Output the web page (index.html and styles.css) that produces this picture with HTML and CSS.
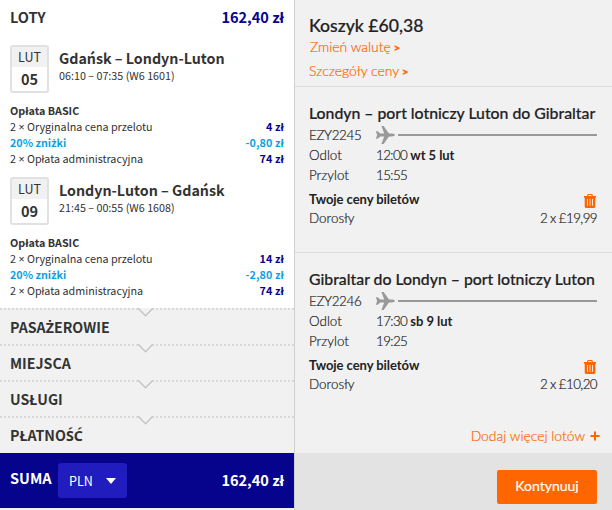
FILE: index.html
```html
<!DOCTYPE html>
<html lang="pl">
<head>
<meta charset="utf-8">
<title>Koszyk</title>
<link rel="stylesheet" href="styles.css">
</head>
<body>
<svg class="defs" width="0" height="0" aria-hidden="true">
  <symbol id="plane" viewBox="0 0 20 20"><path d="M0.8 6.2H2.6L5.4 8.6H9.2L6.4 1H8.6L14 8.6H17.2Q20 9 20 10Q20 11 17.2 11.4H14L8.6 19H6.4L9.2 11.4H5.4L2.6 13.8H0.8L2.2 10Z"/></symbol>
  <symbol id="trash" viewBox="0 0 12 14"><path fill-rule="evenodd" d="M3.2 2V1.2Q3.2 0 4.4 0H7.6Q8.8 0 8.8 1.2V2H12V3.8H11.3V12.4Q11.3 14 9.7 14H2.3Q.7 14 .7 12.4V3.8H0V2ZM4.4 2H7.6V1.1H4.4Z"/><path class="slots" d="M3.5 5V11.8M6 5V11.8M8.5 5V11.8"/></symbol>
</svg>
<main class="page">
  <section class="wizz">
    <header class="head"><b>LOTY</b><b class="price">162,40 zł</b></header>
    <article class="flight">
      <div class="route">
        <div class="date"><span>LUT</span><b>05</b></div>
        <div><h2>Gdańsk – Londyn-Luton</h2><p>06:10 – 07:35 (W6 1601)</p></div>
      </div>
      <b class="line fare">Opłata BASIC</b>
      <div class="line"><span>2 <i class="alt">×</i> Oryginalna cena przelotu</span><b>4 zł</b></div>
      <div class="line sale"><b>20% zni<i class="alt">ż</i>ki</b><b>-0,80 zł</b></div>
      <div class="line"><span>2 <i class="alt">×</i> Opłata administracyjna</span><b>74 zł</b></div>
    </article>
    <article class="flight">
      <div class="route">
        <div class="date"><span>LUT</span><b>09</b></div>
        <div><h2>Londyn-Luton – Gdańsk</h2><p>21:45 – 00:55 (W6 1608)</p></div>
      </div>
      <b class="line fare">Opłata BASIC</b>
      <div class="line"><span>2 <i class="alt">×</i> Oryginalna cena przelotu</span><b>14 zł</b></div>
      <div class="line sale"><b>20% zni<i class="alt">ż</i>ki</b><b>-2,80 zł</b></div>
      <div class="line"><span>2 <i class="alt">×</i> Opłata administracyjna</span><b>74 zł</b></div>
    </article>
    <nav class="steps">
      <div class="step"><svg width="15" height="9"><path d="M0 .8H.6L7.5 7.7L14.4 .8H15"/></svg>PASA<i class="alt">Ż</i>EROWIE</div>
      <div class="step"><svg width="15" height="9"><path d="M0 .8H.6L7.5 7.7L14.4 .8H15"/></svg>MIEJSCA</div>
      <div class="step"><svg width="15" height="9"><path d="M0 .8H.6L7.5 7.7L14.4 .8H15"/></svg>USŁUGI</div>
      <div class="step"><svg width="15" height="9"><path d="M0 .8H.6L7.5 7.7L14.4 .8H15"/></svg>PŁATNO<i class="alt">ŚĆ</i></div>
    </nav>
    <footer class="sum"><b class="label">SUMA</b><span class="select">PLN<i class="arrow"></i></span><b class="total">162,40 zł</b></footer>
  </section>
  <section class="easy">
    <header class="basket">
      <h1>Koszyk £60,38</h1>
      <a class="currency">Zmień walutę <b>&gt;</b></a>
      <a class="details">Szczegóły ceny <b>&gt;</b></a>
    </header>
    <article class="trip first">
      <h2>Londyn – port lotniczy Luton do Gibraltar</h2>
      <div class="row"><span class="key code">EZY2245</span><svg class="plane" width="20" height="20"><use href="#plane"/></svg><hr></div>
      <div class="row"><span class="key">Odlot</span><span class="time">12:00</span><b>wt 5 lut</b></div>
      <div class="row"><span class="key">Przylot</span><span class="time">15:55</span></div>
      <div class="row tickets"><b>Twoje ceny biletów</b><svg class="trash" width="12" height="14"><use href="#trash"/></svg></div>
      <div class="row adult"><span>Dorosły</span><span class="cost">2 x £19,99</span></div>
    </article>
    <article class="trip second">
      <h2>Gibraltar do Londyn – port lotniczy Luton</h2>
      <div class="row"><span class="key code">EZY2246</span><svg class="plane" width="20" height="20"><use href="#plane"/></svg><hr></div>
      <div class="row"><span class="key">Odlot</span><span class="time">17:30</span><b>sb 9 lut</b></div>
      <div class="row"><span class="key">Przylot</span><span class="time">19:25</span></div>
      <div class="row tickets"><b>Twoje ceny biletów</b><svg class="trash" width="12" height="14"><use href="#trash"/></svg></div>
      <div class="row adult"><span>Dorosły</span><span class="cost">2 x £10,20</span></div>
      <a class="more"><span>Dodaj więcej lotów</span><svg width="10" height="10"><path d="M5 .5V9.5M.5 5H9.5"/></svg></a>
    </article>
    <footer class="actions"><button>Kontynuuj</button></footer>
  </section>
</main>
</body>
</html>
```
FILE: styles.css
```css
* { box-sizing: border-box; margin: 0; padding: 0; }
body { width: 612px; height: 510px; overflow: hidden; background: #f1f1f1; }
.defs { position: absolute; }
.page { display: grid; grid-template-columns: 294px 318px; height: 510px; }

.wizz { font: 10.75px/16px "Noto Sans CJK JP", "Noto Sans", sans-serif; color: #333; }
.alt { font-family: "Noto Sans", sans-serif; font-style: normal; line-height: 1; }
.head { display: flex; justify-content: space-between; height: 45px; padding: 7px 10px 0; background: #fff; font-size: 14.5px; line-height: 20px; }
.price { color: #06038d; }
.flight { height: 132px; padding: 0 10px; background: #fff; }
.route { display: flex; gap: 10px; height: 58px; }
.date { width: 39px; height: 48px; border: 2px solid #e1e1e1; border-radius: 3px; text-align: center; }
.date span { display: block; height: 20px; background: #f1f1f1; font-size: 12.5px; line-height: 20px; }
.date b { display: block; font-size: 14.5px; line-height: 24px; }
.route h2 { font-size: 14.25px; line-height: 20px; padding-top: 3px; white-space: nowrap; }
.route p { line-height: 16px; }
.line { display: flex; justify-content: space-between; height: 16px; white-space: nowrap; }
.line b:last-child { color: #06038d; letter-spacing: .1px; }
.sale b, .sale b:last-child { color: #0f9fe0; }
.step { position: relative; height: 36px; padding: 8px 10px 0; background: repeating-linear-gradient(90deg, #dadada 0 2px, transparent 2px 4px) 0 0 / 100% 2px no-repeat #f1f1f1; font-size: 14.2px; font-weight: 700; line-height: 22px; }
.steps { height: 145px; margin-top: -1px; background: #f1f1f1; }
.step svg { position: absolute; left: 138px; top: 0; background: #f1f1f1; }
.step path { fill: none; stroke: #c4c4c4; stroke-width: 1.4; }
.sum { display: flex; align-items: center; height: 55px; padding: 0 10px; background: #06038d; color: #fff; font-size: 14.5px; }
.sum .label { padding-bottom: 6px; width: 48px; }
.select { display: flex; align-items: center; justify-content: space-between; width: 69px; height: 35px; padding: 0 11px; border-radius: 3px; background: #211cbe; font-size: 12.5px; }
.arrow { border: 5px solid transparent; border-top: 6px solid #fff; border-bottom: 0; }
.total { margin-left: auto; padding-bottom: 1px; }

.easy { border-left: 1px solid #d0d0d0; background: #f1f1f1; font: 300 13.4px/20px Lato, sans-serif; color: #222; white-space: nowrap; -webkit-text-stroke: .2px currentColor; }
.basket { display: flex; flex-direction: column; height: 87px; padding: 14px 14px 0; border-bottom: 1px solid #ddd; }
h1 { font-size: 17.6px; line-height: 23px; font-weight: 500; margin-bottom: -2px; }
.easy a { color: #f60; font-size: 13.9px; }
.basket a { line-height: 23px; }
.basket .currency { padding-left: 1px; }
.basket b { font-size: 12px; font-weight: 900; margin-left: -1px; }
.trip { padding: 15px 15px 0 14px; }
.first { height: 166px; border-bottom: 1px solid #ddd; }
.second { height: 200px; }
.trip h2 { font-size: 15.8px; font-weight: 500; line-height: 22px; margin-bottom: 1px; }
.row { display: flex; height: 20px; }
.key { width: 67px; }
.code { letter-spacing: -.35px; }
.time { letter-spacing: -.6px; margin-right: 3px; }
.cost { letter-spacing: -.6px; }
.plane { margin-left: -1px; fill: #999; }
.row hr { flex: 1; height: 2px; margin: 9px 0 0 3px; border: 0; background: #999; }
.tickets { justify-content: space-between; padding-top: 4px; height: 24px; }
.trash { fill: #f60; margin: 5px 1px 0; overflow: visible; -webkit-text-stroke: 0; }
.slots { stroke: #f1f1f1; stroke-width: .9; fill: none; }
.adult { justify-content: space-between; line-height: 19px; }
.easy .row b { font-size: 13px; font-weight: 700; letter-spacing: -.05px; -webkit-text-stroke: 0; }
.more { display: flex; justify-content: flex-end; align-items: center; gap: 5px; height: 20px; margin-top: 31px; margin-right: -3px; }
.more path { stroke: #f60; stroke-width: 2; }
.actions { display: flex; justify-content: flex-end; height: 57px; padding: 17px 15px 0; background: #e3e3e3; }
.actions button { width: 100px; height: 34px; padding-bottom: 3px; border: 0; border-radius: 2px; background: #f60; color: #fff; font: 400 14px Lato, sans-serif; }
```
